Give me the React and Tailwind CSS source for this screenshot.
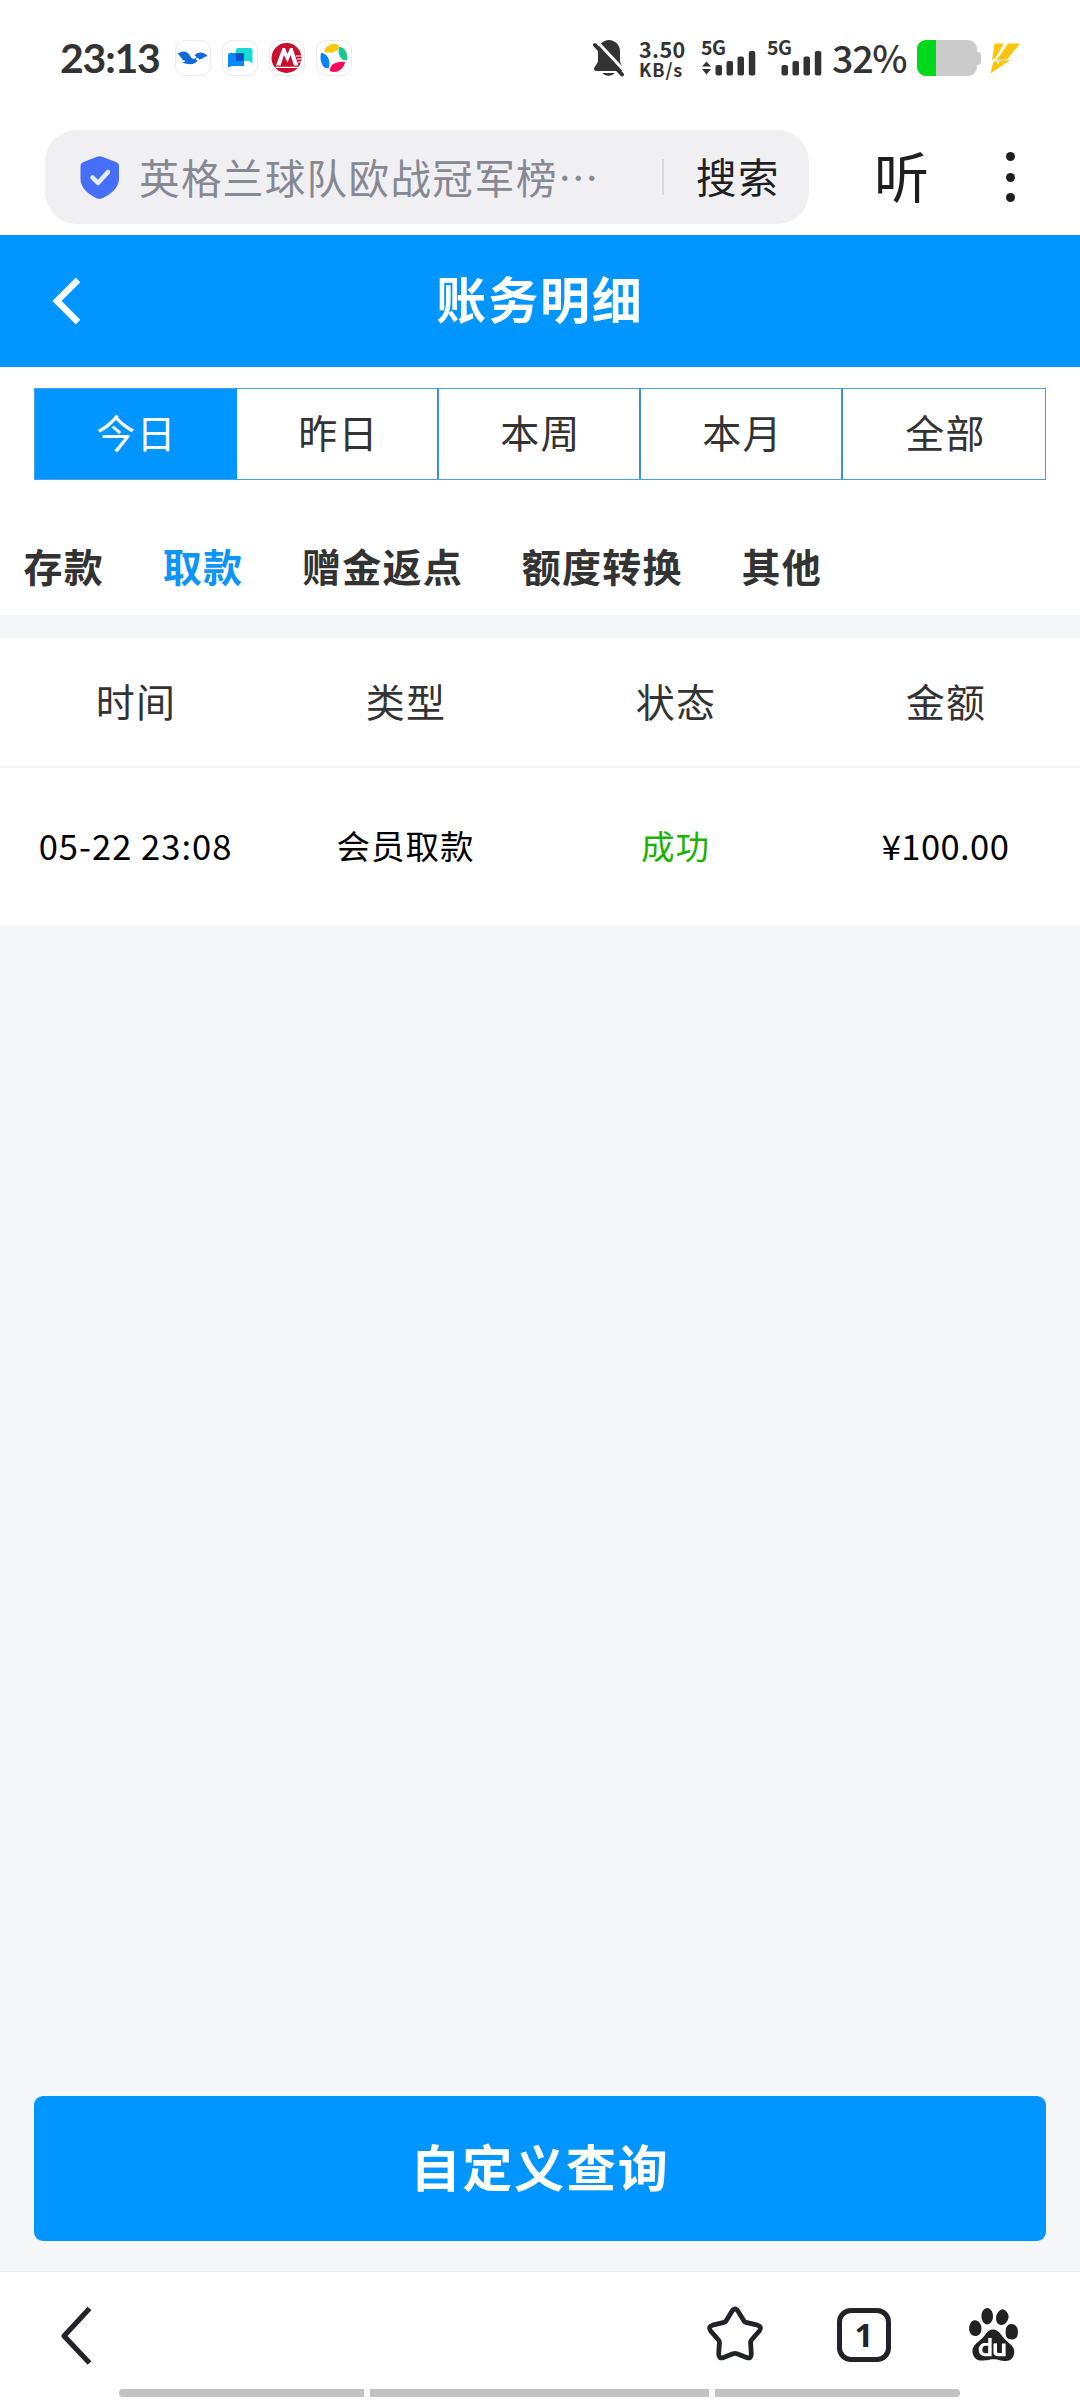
import React from "react";
import { SiBaidu } from "react-icons/si";

const tabs = ["今日", "昨日", "本周", "本月", "全部"];
const categories = ["存款", "取款", "赠金返点", "额度转换", "其他"];
const columns = ["时间", "类型", "状态", "金额"];

function AppBadge({ children }) {
  return (
    <span className="flex h-9 w-9 items-center justify-center rounded-[10px] border border-[#ebebeb] bg-white">
      <svg width="34" height="34" viewBox="0 0 34 34">{children}</svg>
    </span>
  );
}

function Signal({ arrows }) {
  return (
    <span className="flex h-9 w-[55px] flex-col">
      <span className="h-[11px] text-[19.5px] leading-[14px] font-bold tracking-[-0.4px]">5G</span>
      <svg width="55" height="25" viewBox="0 11 55 25" className="shrink-0" fill="#333">
        {arrows && <path d="M5.5 21.5 L10 26.5 H1 Z M1 29 H10 L5.5 34.5 Z" />}
        <rect x="14.5" y="25" width="6.5" height="10.5" rx="2" />
        <rect x="25.5" y="21" width="6.5" height="14.5" rx="2" />
        <rect x="36.5" y="16.5" width="6.5" height="19" rx="2" />
        <rect x="47.8" y="11" width="6.5" height="24.5" rx="2" />
      </svg>
    </span>
  );
}

function StatusBar() {
  return (
    <div className="flex h-[116px] items-start pt-10 text-[#333]">
      <div className="ml-[60px] w-[115px] font-[Lato,sans-serif] text-[41px] leading-9 font-bold tracking-[-1.2px]">23:13</div>
      <div className="flex gap-[11px]">
        <AppBadge>
          <path fill="#1268d6" d="M1.500 13 C5 10 11 9 14 15 C16 18 18 18.500 20 17 C20 16 20.500 16 21 16.500 C20.500 15 19 15 18.500 14.500 C21 11.500 27 9.500 32 15.500 C29 14.500 29 16.500 26.500 17.500 C24 18.500 23 18.500 21.500 20 C19 23 14 24.500 6 21.500 C8 21.500 9 20.500 9 19.500 C6.500 19.500 5.500 18.500 6.500 17.500 C4 17 4.500 14 1.500 13 Z" />
          <circle cx="21.500" cy="18.300" r="1.400" fill="#fff" />
        </AppBadge>
        <AppBadge>
          <path fill="#17dbd5" d="M15 7 H28 Q29.500 7 29.500 9 V22.500 L26 20 H14 Q13 20 13 18 V9 Q13 7 15 7 Z" />
          <path fill="#0989ff" d="M7 12 H21 V25 H9 L5 26.500 V14 Q5 12 7 12 Z" />
          <path fill="#0752c4" d="M13 12 H21 V20 H13 Z" />
        </AppBadge>
        <AppBadge>
          <circle cx="16.500" cy="17" r="15" fill="#c8102e" />
          <path fill="#fff" d="M6 24.500 L12.500 7 H15 L17.500 13 L20 7 H22.500 L28.500 24.500 H24 L20.500 14 L17.500 21.500 L14 14 L10.500 24.500 Z" />
          <path d="M5.500 26.300 H28.500 M26 15 H31 M27 18 H31 M28 21 H31" stroke="#fff" strokeWidth="1.200" />
        </AppBadge>
        <AppBadge>
          <path fill="#fbc80c" d="M7 10 C9 4 18 0 22 5 C22 10 14 14 7 10 Z" />
          <path fill="#17c98b" d="M22 6 C28 6 31 12 30 19 C25 21 20 14 22 6 Z" />
          <path fill="#f90a5b" d="M28 21 C27 28 20 33 13 30 C12 24 19 20 28 21 Z" />
          <path fill="#0a83f7" d="M4 12 C10 12 14 19 12 27 C6 29 2 20 4 12 Z" />
        </AppBadge>
      </div>
      <svg className="ml-[240px]" width="34" height="37" viewBox="0 0 34 37">
        <path fill="#333" d="M17 0 C23 0 28 5 28 11 V20 C28 24 31 26 31 29 Q31 31 29 31 H5 Q2 31 2 29 C2 26 6 24 6 20 V11 C6 5 11 0 17 0 Z M10.500 33 H22.500 C20 36.500 13 36.500 10.500 33 Z" />
        <path d="M5 1.500 L33 31.500" stroke="#fff" strokeWidth="3" />
        <path d="M3 5 L30 34.500" stroke="#333" strokeWidth="4" strokeLinecap="round" />
      </svg>
      <div className="ml-[13px] w-[62px] font-['Noto_Sans_CJK_SC',sans-serif] font-bold">
        <div className="h-5 text-[21.5px] leading-[18px] tracking-[0.4px]">3.50</div>
        <div className="h-5 text-[18px] leading-[18px] tracking-[0.9px]">KB/s</div>
      </div>
      <div className="flex gap-[11px] font-['Noto_Sans_CJK_SC',sans-serif]">
        <Signal arrows />
        <Signal />
      </div>
      <div className="ml-[10px] w-[85px] font-['Noto_Sans_CJK_SC',sans-serif] text-[37.5px] leading-[33px] font-medium tracking-[-1.2px]">32%</div>
      <div className="flex items-center">
        <span className="flex h-9 w-[60px] overflow-hidden rounded-[9px] bg-[#cbcbcb]">
          <span className="w-[19px] bg-[#00d91b]" />
        </span>
        <span className="h-[13px] w-1 rounded-r-[3px] bg-[#cbcbcb]" />
      </div>
      <svg className="mt-[3px] ml-[8px]" width="32" height="32" viewBox="0 0 32 32" fill="#fcc40c">
        <path d="M5.500 0.500 H15 L6.500 15 L3 17.500 Z" />
        <path d="M19 0.500 H31 L18 16.500 H22 L1.500 30.500 L4.500 18 L8 16.500 Z" />
        <path d="M2 18.500 L10 17.500 L8.500 21 M10 17.500 L21 16.500" stroke="#fff" strokeWidth="1.200" fill="none" />
      </svg>
    </div>
  );
}

function BrowserBar() {
  return (
    <div className="flex h-[119px] items-start pt-[14px] pl-[45px]">
      <div className="flex h-[94px] w-[764px] items-center rounded-[32px] bg-[#f0f0f2] pl-[35px]">
        <svg width="39" height="43" viewBox="0 0 39 43">
          <path fill="#466ef8" d="M17 0.800 Q19.500 -0.200 22 0.800 L36 6 Q39 7.200 39 10 V23 C39 32 30 39 22.500 42.200 Q19.500 43.500 16.500 42.200 C9 39 0.500 32 0.500 23 V10 Q0.500 7.200 3.500 6 Z" />
          <path d="M12.500 21.500 L18 27 L28 16" fill="none" stroke="#e6ebff" strokeWidth="4.500" strokeLinecap="round" strokeLinejoin="round" />
        </svg>
        <span className="ml-[20px] w-[523px] pb-px text-[40.5px] leading-[60px] tracking-[1.4px] whitespace-nowrap text-[#868892]">英格兰球队欧战冠军榜…</span>
        <span className="h-9 w-0.5 bg-[#d9d9dc]" />
        <span className="ml-[32px] pb-[3px] text-[40.5px] leading-[60px] tracking-[1.4px] whitespace-nowrap text-[#1f2023]">搜索</span>
      </div>
      <div className="mt-[4px] ml-[65px] w-[59px] text-[55px] leading-[80px] text-[#1f1f1f]">听</div>
      <div className="mt-[22px] ml-[73px] flex flex-col gap-[11.5px]">
        <span className="h-[9px] w-[9px] rounded-full bg-[#1f1f1f]" />
        <span className="h-[9px] w-[9px] rounded-full bg-[#1f1f1f]" />
        <span className="h-[9px] w-[9px] rounded-full bg-[#1f1f1f]" />
      </div>
    </div>
  );
}

function TitleBar() {
  return (
    <header className="grid h-[132px] grid-cols-3 items-center bg-[#0095ff] text-white">
      <svg className="ml-[52px]" width="30" height="46" viewBox="0 0 30 46">
        <path d="M26 2 L5 23 L26 44" fill="none" stroke="#fff" strokeWidth="6.500" />
      </svg>
      <h1 className="pb-[8px] text-center text-[50px] leading-[76px] font-bold tracking-[1.84px]">账务明细</h1>
    </header>
  );
}

function BottomBar() {
  return (
    <nav className="flex h-[129px] flex-col border-t border-[#eceef0] bg-white">
      <div className="flex h-[117px] items-start">
        <svg className="mt-[34px] ml-[59px]" width="36" height="60" viewBox="0 0 36 60">
          <path d="M30.500 2.500 L5 30 L30.500 57" fill="none" stroke="#222428" strokeWidth="5.200" strokeLinejoin="round" />
        </svg>
        <svg className="mt-[34px] ml-[611px]" width="58" height="56" viewBox="0 0 58 56">
          <path d="M25.800 5.500 Q29 0.500 32.200 5.500 L37.700 14.500 Q38.500 16 40 16.400 L51.500 19.200 Q56.500 20.800 53.300 25 L45.500 34 Q44.500 35.200 44.600 37 L45.300 48 Q45.200 53.300 40.500 51.500 L31 47.700 Q29 47 27 47.700 L17.500 51.500 Q12.800 53.300 12.700 48 L13.400 37 Q13.500 35.200 12.500 34 L4.700 25 Q1.500 20.800 6.500 19.200 L18 16.400 Q19.500 16 20.300 14.500 Z" fill="none" stroke="#222328" strokeWidth="4.800" strokeLinejoin="round" />
        </svg>
        <div className="mt-[36px] ml-[73px] flex h-[54px] w-[54px] items-center justify-center rounded-[14px] border-[5px] border-[#222328] pb-px font-['Open_Sans',sans-serif] text-[33px] leading-[42px] font-bold text-[#222328]">1</div>
        <SiBaidu className="mt-[36px] ml-[76px] h-[53px] w-[53px] text-[#222]" />
      </div>
      <div className="ml-[119px] flex gap-[6px]">
        <span className="h-2 w-[245px] rounded-l-full bg-[#c2c2c2]" />
        <span className="h-2 w-[339px] bg-[#c2c2c2]" />
        <span className="h-2 w-[245px] rounded-r-full bg-[#c2c2c2]" />
      </div>
    </nav>
  );
}

export default function App() {
  return (
    <div className="flex h-[2400px] w-[1080px] flex-col overflow-hidden bg-[#f4f6f8] font-['Noto_Sans_CJK_SC',sans-serif]">
      <div className="bg-white">
        <StatusBar />
        <BrowserBar />
      </div>
      <TitleBar />
      <section className="h-[248px] bg-white pt-[21px]">
        <div className="mx-[34px] grid h-[92px] grid-cols-5 border border-[#4a9fe3]">
          {tabs.map((t, i) => (
            <button
              key={t}
              className={
                i === 0
                  ? "border-r-2 border-[#0095ff] bg-[#0095ff] pb-[5px] pl-[3px] text-[39px] tracking-[1.3px] text-white"
                  : i === 4
                    ? "pb-[5px] pl-[3px] text-[39px] tracking-[1.3px] text-[#333]"
                    : "border-r-2 border-[#3590de] pb-[5px] pl-[3px] text-[39px] tracking-[1.3px] text-[#333]"
              }
            >
              {t}
            </button>
          ))}
        </div>
        <div className="mt-[55px] flex gap-[58.9px] pl-[23.500px] text-[39px] leading-[60px] font-bold tracking-[1.2px] whitespace-nowrap text-[#333]">
          {categories.map((c, i) => (
            <span key={c} className={i === 1 ? "text-[#0f95f8]" : ""}>{c}</span>
          ))}
        </div>
      </section>
      <section className="mt-[23px] bg-white">
        <div className="grid h-[130px] grid-cols-4 items-center border-b-2 border-[#f3f4f5] pb-1 text-center text-[39px] leading-[60px] tracking-[1.3px] text-[#333]">
          {columns.map((c) => (
            <span key={c} className="pl-[2px]">{c}</span>
          ))}
        </div>
        <div className="grid h-[157px] grid-cols-4 items-center pb-[4px] text-center text-[33.5px] leading-[50px] tracking-[1px] text-black">
          <span className="pl-px text-[34.56px] whitespace-nowrap">05-22 23:08</span>
          <span className="pl-px">会员取款</span>
          <span className="pl-px text-[#1db300]">成功</span>
          <span className="pl-px text-[34.56px] tracking-[0.4px]">¥100.00</span>
        </div>
      </section>
      <div className="mt-auto px-[34px] pb-[30px]">
        <button className="h-[145px] w-full rounded-[9px] bg-[#0095ff] pb-[8px] text-[50px] leading-[76px] font-bold tracking-[1.84px] text-white">自定义查询</button>
      </div>
      <BottomBar />
    </div>
  );
}
